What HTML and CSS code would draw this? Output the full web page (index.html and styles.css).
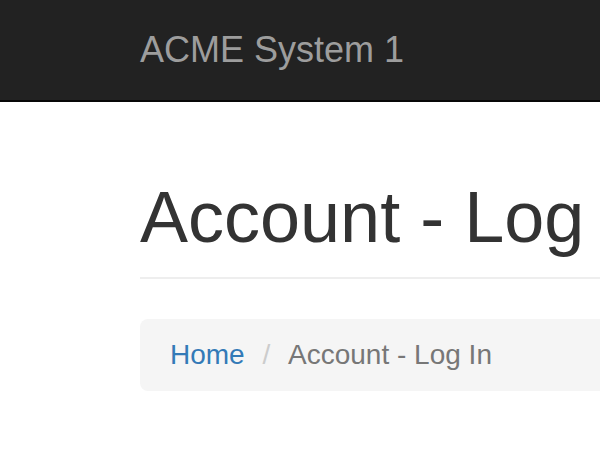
FILE: index.html
```html
<!DOCTYPE html>
<html lang="en">
<head>
<meta charset="utf-8">
<title>Account - Log In</title>
<link rel="stylesheet" href="styles.css">
</head>
<body>
<nav class="navbar">
  <div class="container">
    <a class="brand" href="#">ACME System 1</a>
  </div>
</nav>
<main class="container">
  <h1 class="title">Account - Log In</h1>
  <hr class="rule">
  <ol class="breadcrumb">
    <li><a href="#">Home</a></li>
    <li class="active">Account - Log In</li>
  </ol>
</main>
</body>
</html>
```
FILE: styles.css
```css
html, body {
  margin: 0;
  padding: 0;
  overflow: hidden;
  background: #fff;
  font-family: "Liberation Sans", Arial, sans-serif;
  color: #333;
}
.container {
  width: 900px;
  padding-left: 140px;
  box-sizing: content-box;
}
.navbar {
  height: 100px;
  background: #222;
  border-bottom: 2px solid #080808;
  width: 100%;
}
.brand {
  display: block;
  padding: 30px 0;
  font-size: 36px;
  line-height: 40px;
  color: #9d9d9d;
  text-decoration: none;
  white-space: nowrap;
}
.title {
  margin: 76px 0 20px;
  font-size: 72px;
  font-weight: 500;
  line-height: 1.1;
  color: #333;
  white-space: nowrap;
}
.rule {
  margin: 0 0 40px;
  border: 0;
  border-top: 2px solid #eee;
  height: 0;
}
.breadcrumb {
  margin: 0;
  padding: 16px 30px;
  list-style: none;
  background: #f5f5f5;
  border-radius: 8px;
  font-size: 28px;
  line-height: 40px;
  white-space: nowrap;
}
.breadcrumb li {
  display: inline-block;
}
.breadcrumb li + li::before {
  content: "/\00a0";
  padding: 0 10px;
  color: #ccc;
}
.breadcrumb a {
  color: #337ab7;
  text-decoration: none;
}
.breadcrumb .active {
  color: #777;
}
```
